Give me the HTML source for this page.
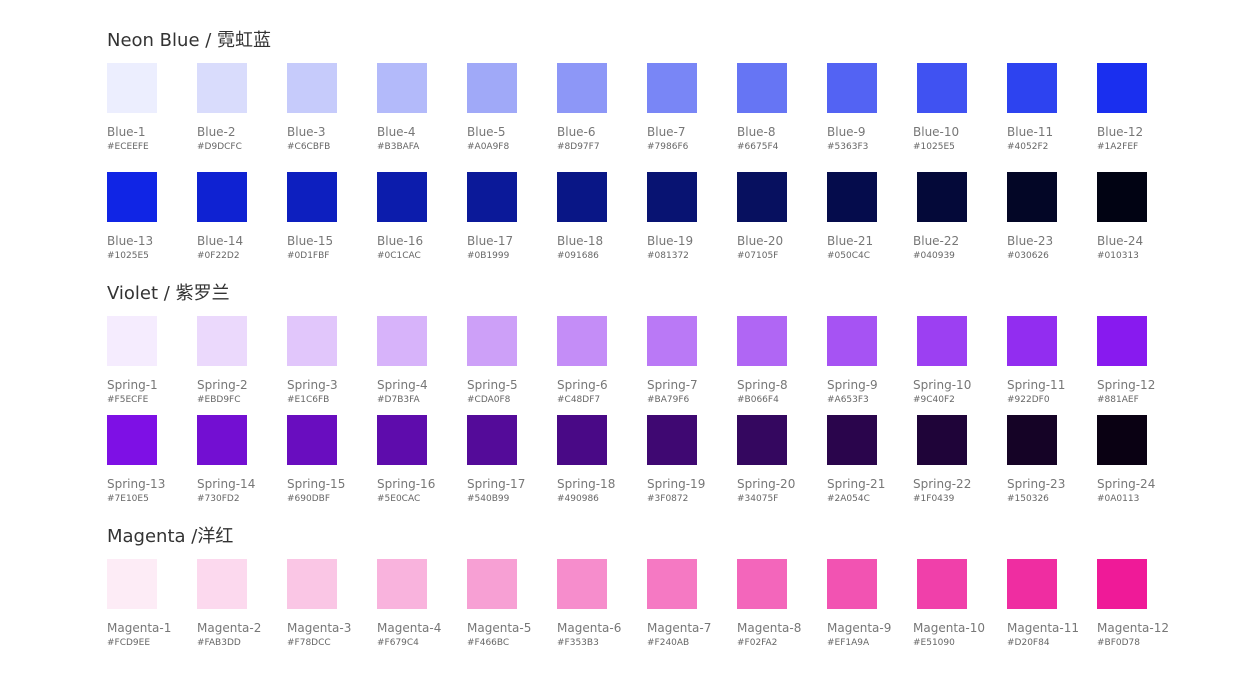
<!DOCTYPE html>
<html><head><meta charset="utf-8"><style>
body{margin:0;width:1248px;height:691px;background:#fff;position:relative;font-family:"DejaVu Sans","Liberation Sans","Noto Sans CJK SC",sans-serif;overflow:hidden}
.t{position:absolute;left:107px;font-size:18px;line-height:22px;color:#333;white-space:nowrap}
.s{position:absolute;width:50px;height:50px}
.l{position:absolute;font-size:12px;line-height:16px;color:#777;white-space:nowrap}
.h{position:absolute;font-size:9px;line-height:12px;color:#666;white-space:nowrap}
</style></head><body>
<div class="t" style="top:30px">Neon Blue / 霓虹蓝</div>
<div class="t" style="top:283px">Violet / 紫罗兰</div>
<div class="t" style="top:526px">Magenta /洋红</div>
<div id="c"></div>
<script>
var rows=[
[63,"Blue",1,["ECEEFE","D9DCFC","C6CBFB","B3BAFA","A0A9F8","8D97F7","7986F6","6675F4","5363F3","1025E5","4052F2","1A2FEF"],["ECEEFE","D9DCFC","C6CBFB","B3BAFA","A0A9F8","8D97F7","7986F6","6675F4","5363F3","4052F2","2D43F0","1A2FEF"]],
[172,"Blue",13,["1025E5","0F22D2","0D1FBF","0C1CAC","0B1999","091686","081372","07105F","050C4C","040939","030626","010313"]],
[316,"Spring",1,["F5ECFE","EBD9FC","E1C6FB","D7B3FA","CDA0F8","C48DF7","BA79F6","B066F4","A653F3","9C40F2","922DF0","881AEF"]],
[415,"Spring",13,["7E10E5","730FD2","690DBF","5E0CAC","540B99","490986","3F0872","34075F","2A054C","1F0439","150326","0A0113"]],
[559,"Magenta",1,["FCD9EE","FAB3DD","F78DCC","F679C4","F466BC","F353B3","F240AB","F02FA2","EF1A9A","E51090","D20F84","BF0D78"],["FDECF6","FCD9EE","FAC6E5","F9B3DD","F7A0D4","F68DCC","F579C3","F366BB","F253B2","F040AA","EF2DA1","EF1A98"]]
];
var h="";
rows.forEach(function(r){
 for(var i=0;i<12;i++){
  var x=107+90*i, y=r[0], col=(r[4]||r[3])[i];
  var lx = i==9 ? x-4 : x;
  h+='<div class="s" style="left:'+x+'px;top:'+y+'px;background:#'+col+'"></div>';
  h+='<div class="l" style="left:'+lx+'px;top:'+(y+61)+'px">'+r[1]+'-'+(r[2]+i)+'</div>';
  h+='<div class="h" style="left:'+lx+'px;top:'+(y+78)+'px">#'+r[3][i]+'</div>';
 }
});
document.getElementById("c").innerHTML=h;
</script>
</body></html>
